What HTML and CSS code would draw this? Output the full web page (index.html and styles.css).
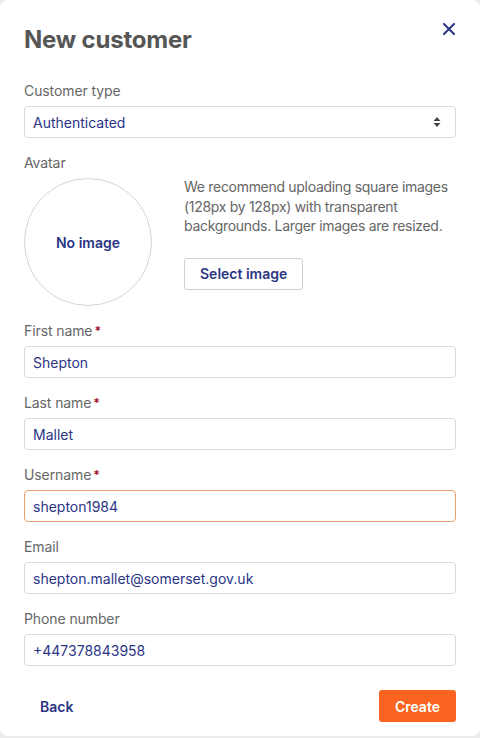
FILE: index.html
```html
<!DOCTYPE html>
<html lang="en">
<head>
<meta charset="UTF-8">
<meta name="viewport" content="width=device-width, initial-scale=1.0">
<title>New customer</title>
<link rel="stylesheet" href="styles.css">
</head>
<body>
<div class="modal">
    <div class="modal-header">
        <h2>New customer</h2>
        <button class="close-btn" aria-label="Close">
            <svg width="12" height="12" viewBox="0 0 12 12"><path d="M1 1L11 11M11 1L1 11" stroke="#2b3585" stroke-width="2" stroke-linecap="square"/></svg>
        </button>
    </div>

    <div class="field">
        <label>Customer type</label>
        <div class="select">
            <span>Authenticated</span>
            <svg width="8" height="12" viewBox="0 0 8 12"><path d="M4 1L7.5 5H0.5Z M4 11L0.5 7H7.5Z" fill="#444"/></svg>
        </div>
    </div>

    <div class="field">
        <label>Avatar</label>
        <div class="avatar-row">
            <div class="avatar">No image</div>
            <div class="avatar-info">
                <p>We recommend uploading square images (128px by 128px) with transparent backgrounds. Larger images are resized.</p>
                <button class="btn-outline">Select image</button>
            </div>
        </div>
    </div>

    <div class="field">
        <label>First name<span class="req">*</span></label>
        <div class="input">Shepton</div>
    </div>
    <div class="field">
        <label>Last name<span class="req">*</span></label>
        <div class="input">Mallet</div>
    </div>
    <div class="field">
        <label>Username<span class="req">*</span></label>
        <div class="input focused">shepton1984</div>
    </div>
    <div class="field">
        <label>Email</label>
        <div class="input">shepton.mallet@somerset.gov.uk</div>
    </div>
    <div class="field">
        <label>Phone number</label>
        <div class="input">+447378843958</div>
    </div>

    <div class="actions">
        <button class="btn-link">Back</button>
        <button class="btn-primary">Create</button>
    </div>
</div>
</body>
</html>
```

FILE: styles.css
```css
body {
    margin: 0;
    background-color: #ececec;
    font-family: 'Inter', 'Noto Sans', sans-serif;
}
.modal {
    background-color: #fff;
    width: 480px;
    height: 736px;
    box-sizing: border-box;
    border-radius: 8px;
    padding: 24px 24px 16px;
}
.modal-header {
    display: flex;
    justify-content: space-between;
    align-items: flex-start;
    margin-bottom: 25px;
}
h2 {
    margin: 0;
    font-size: 24px;
    line-height: 32px;
    font-weight: 700;
    color: #565656;
    letter-spacing: -0.2px;
}
.close-btn {
    background: none;
    border: none;
    padding: 0;
    margin: -2px 0 0 0;
    width: 14px;
    height: 14px;
    display: flex;
    align-items: center;
    justify-content: center;
    cursor: pointer;
}
.field {
    display: flex;
    flex-direction: column;
    gap: 5px;
    margin-bottom: 15px;
}
label {
    font-size: 14px;
    line-height: 20px;
    color: #666;
    letter-spacing: -0.1px;
}
.req {
    color: #a3122a;
    font-weight: 700;
    margin-left: 2px;
    font-size: 12px;
    vertical-align: top;
}
.select, .input {
    height: 32px;
    box-sizing: border-box;
    border: 1px solid #d9d9de;
    border-radius: 4px;
    padding: 0 14px 0 8px;
    display: flex;
    align-items: center;
    font-size: 14px;
    color: #2b3585;
}
.select {
    justify-content: space-between;
}
.input.focused {
    border-color: #e9a070;
}
.avatar-row {
    display: flex;
    gap: 32px;
}
.avatar {
    width: 128px;
    height: 128px;
    flex-shrink: 0;
    box-sizing: border-box;
    border: 1px solid #d4d4d4;
    border-radius: 50%;
    display: flex;
    align-items: center;
    justify-content: center;
    font-size: 14px;
    font-weight: 600;
    color: #2b3585;
}
.avatar-info p {
    margin: -1px 0 22px;
    font-size: 14px;
    line-height: 19.5px;
    color: #666;
    letter-spacing: -0.3px;
}
button {
    font-family: inherit;
}
.btn-outline {
    height: 32px;
    padding: 0 15px;
    background: #fff;
    border: 1px solid #cfcfd4;
    border-radius: 3px;
    font-size: 14px;
    font-weight: 600;
    color: #2b3585;
    cursor: pointer;
}
.actions {
    display: flex;
    justify-content: space-between;
    margin-top: 24px;
}
.btn-link {
    height: 32px;
    padding: 0 16px;
    background: none;
    border: none;
    font-size: 14px;
    font-weight: 600;
    color: #2b3585;
    cursor: pointer;
}
.btn-primary {
    height: 32px;
    padding: 0 16px;
    background-color: #fa6420;
    border: none;
    border-radius: 3px;
    font-size: 14px;
    font-weight: 600;
    color: #fff;
    cursor: pointer;
}
```
